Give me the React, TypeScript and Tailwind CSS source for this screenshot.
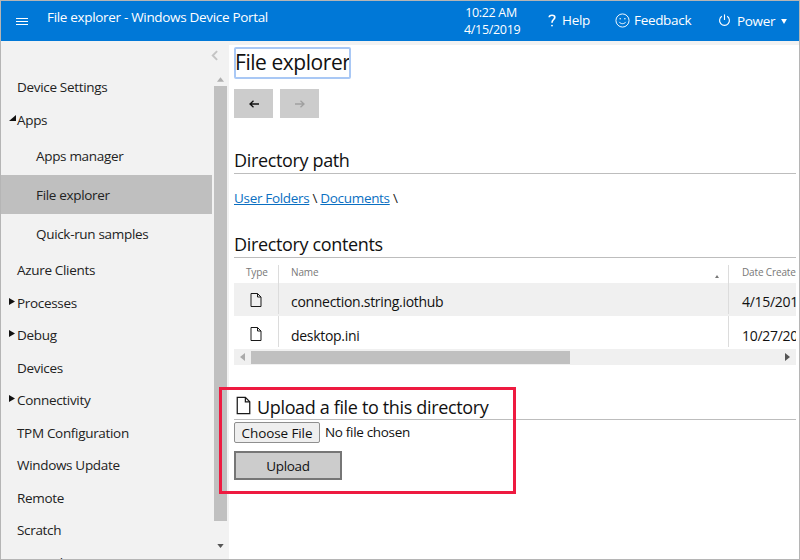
import React from "react";

const FileIcon = ({ className }: { className: string }) => (
  <svg viewBox="0 0 12 14" className={className} fill="none" stroke="#1a1a1a" strokeWidth="1">
    <path d="M1 .5h6.5L11 4v9.5H1z" />
    <path d="M7.5 .5V4H11" />
  </svg>
);

const Caret = ({ open }: { open?: boolean }) => (
  <svg viewBox="0 0 7 7" className="absolute left-[8px] top-1/2 -mt-[5px] w-[7px] h-[7px]" fill="#111">
    {open ? <path d="M7 0v6H0z" /> : <path d="M0 0l6 3.5L0 7z" />}
  </svg>
);

const Item = ({ label, caret, open }: { label: string; caret?: boolean; open?: boolean }) => (
  <div className="relative h-[32.5px] flex items-center pl-4 shrink-0">
    {caret && <Caret open={open} />}
    {label}
  </div>
);

const Sub = ({ label, active }: { label: string; active?: boolean }) => (
  <div className={`h-[39px] flex items-center pl-[35px] pt-[2px] shrink-0 ${active ? "bg-[#bfbfbf]" : ""}`}>{label}</div>
);

const Heading = ({ children }: { children: React.ReactNode }) => (
  <div className="text-[18px] leading-[24px] tracking-[-0.35px] text-[#111] border-b border-[#bdbdbd] pb-[1px]">{children}</div>
);

const Row = ({ name, date, shaded }: { name: string; date: string; shaded?: boolean }) => (
  <div className={`flex text-[14px] tracking-[-0.3px] text-[#111] ${shaded ? "h-[33px] bg-[#f0f0f0]" : "h-[31px]"}`}>
    <div className={`w-[45px] border-r border-[#dcdcdc] flex justify-center ${shaded ? "pt-[10px] mb-[2px]" : "pt-[11px]"}`}>
      <FileIcon className="w-[12px] h-[14px] mr-[1px]" />
    </div>
    <div className={`w-[450px] pl-3 border-r border-[#dcdcdc] flex items-center ${shaded ? "pt-[5px] mb-[2px]" : "pt-[8px]"}`}>{name}</div>
    <div className={`pl-[13px] flex items-center whitespace-nowrap ${shaded ? "pt-[5px] mb-[2px]" : "pt-[8px]"}`}>{date}</div>
  </div>
);

export default function App() {
  return (
    <div className="relative w-[800px] h-[560px] overflow-hidden bg-white flex flex-col border-t border-l border-r border-b border-[#b5b5b5] text-[13.5px] tracking-[-0.32px] text-[#222]" style={{ fontFamily: '"Open Sans", "Noto Sans", sans-serif' }}>
      <header className="h-[40px] bg-[#0078d7] text-white flex items-center shrink-0">
        <div className="ml-[15px] w-[12px] flex flex-col gap-[2px]">
          <div className="h-px bg-white" />
          <div className="h-px bg-white" />
          <div className="h-px bg-white" />
        </div>
        <div className="ml-[19px] w-[417px] -mt-[7px] whitespace-nowrap">File explorer - Windows Device Portal</div>
        <div className="w-[54px] text-center text-[12.5px] leading-[17px] -mt-[1px] whitespace-nowrap">
          <div>10:22 AM</div>
          <div>4/15/2019</div>
        </div>
        <svg viewBox="0 0 8 14" className="ml-[30px] -mt-[2px] w-[8px] h-[13px]" fill="none" stroke="white" strokeWidth="1.8">
          <path d="M1 3.5C1 .6 7 .6 7 3.5 7 6 4 6 4 9.5" />
          <circle cx="4" cy="12.5" r="1" fill="white" stroke="none" />
        </svg>
        <span className="ml-[6px] w-[27px] -mt-[2px]">Help</span>
        <svg viewBox="0 0 16 16" className="ml-[26px] -mt-[1px] w-[15px] h-[15px]" fill="none" stroke="white" strokeWidth="1">
          <circle cx="8" cy="8" r="7" />
          <path d="M4.5 9.5c1.5 2.5 5.5 2.5 7 0" />
          <circle cx="5.5" cy="6" r=".8" fill="white" stroke="none" />
          <circle cx="10.5" cy="6" r=".8" fill="white" stroke="none" />
        </svg>
        <span className="ml-[4px] w-[57px] -mt-[2px]">Feedback</span>
        <svg viewBox="0 0 14 14" className="ml-[27px] -mt-[3px] w-[13px] h-[14px]" fill="none" stroke="white" strokeWidth="1.2">
          <path d="M7 1v6" />
          <path d="M4.2 3A5.3 5.3 0 1 0 9.8 3" />
        </svg>
        <span className="ml-[6px] w-[37px]">Power</span>
        <svg viewBox="0 0 7 6" className="ml-[7px] w-[6px] h-[5px]" fill="white"><path d="M0 0h7L3.5 6z" /></svg>
      </header>
      <div className="flex-1 flex min-h-0 bg-[#f2f2f2]">
        <aside className="w-[228px] shrink-0 flex text-[#222]">
          <nav className="w-[211px] pt-[29px] overflow-hidden flex flex-col">
            <div className="h-[33.5px] flex items-center pl-4 shrink-0">Device Settings</div>
            <Item label="Apps" caret open />
            <Sub label="Apps manager" />
            <Sub label="File explorer" active />
            <div className="h-[40.2px] flex items-center pl-[35px] pt-[1px] shrink-0">Quick-run samples</div>
            <Item label="Azure Clients" />
            <Item label="Processes" caret />
            <Item label="Debug" caret />
            <Item label="Devices" />
            <Item label="Connectivity" caret />
            <Item label="TPM Configuration" />
            <Item label="Windows Update" />
            <Item label="Remote" />
            <Item label="Scratch" />
            <Item label="Tutorials" />
          </nav>
          <div className="ml-[2px] w-[13px] flex flex-col items-center">
            <svg viewBox="0 0 8 12" className="mt-[9px] self-start -ml-[3px] w-[7px] h-[11px]" fill="none" stroke="#c4c4c4" strokeWidth="2.2"><path d="M7 1L2 6l5 5" /></svg>
            <svg viewBox="0 0 8 5" className="mt-[16px] w-[7px] h-[5px]" fill="#b0b0b0"><path d="M4 0l4 5H0z" /></svg>
            <div className="mt-[4px] w-[13px] h-[435px] bg-[#c0c0c0]" />
            <svg viewBox="0 0 8 5" className="mt-[23px] w-[7px] h-[4px]" fill="#555"><path d="M0 0h8L4 5z" /></svg>
          </div>
        </aside>
        <main className="flex-1 min-w-0 mt-[4px] bg-white pl-[5px] pr-[3px] flex flex-col">
          <div className="w-[117px] h-[32px] mt-[2px] border-2 border-[#a9c8f5] rounded-[2px] flex items-center text-[21px] tracking-[-0.45px] text-[#111] whitespace-nowrap overflow-hidden">
            <span className="-ml-[1px]">File explorer</span>
          </div>
          <div className="flex gap-[7px] mt-[10px]">
            <div className="w-[39px] h-[29px] bg-[#cccccc] flex items-center justify-center">
              <svg viewBox="0 0 10 8" className="w-[10px] h-[8px]" fill="none" stroke="#111" strokeWidth="1.3"><path d="M10 4H1M4.5.8L1 4l3.5 3.2" /></svg>
            </div>
            <div className="w-[39px] h-[29px] bg-[#cccccc] flex items-center justify-center">
              <svg viewBox="0 0 10 8" className="w-[10px] h-[8px]" fill="none" stroke="#a0a0a0" strokeWidth="1.3"><path d="M0 4h9M5.5.8L9 4 5.5 7.2" /></svg>
            </div>
          </div>
          <div className="mt-[30px]"><Heading>Directory path</Heading></div>
          <div className="mt-[14px] leading-[20px] text-[#222]">
            <span className="text-[#0a6fc2] underline">User Folders</span> \ <span className="text-[#0a6fc2] underline">Documents</span> \
          </div>
          <div className="mt-[24px]"><Heading>Directory contents</Heading></div>
          <div className="mt-[7px] overflow-hidden">
            <div className="w-[800px]">
              <div className="flex h-[18px] text-[10px] tracking-[-0.15px] text-[#777]">
                <div className="w-[45px] border-r border-[#dcdcdc] pl-[12px]">Type</div>
                <div className="relative w-[450px] border-r border-[#dcdcdc] pl-3">
                  Name
                  <svg viewBox="0 0 4 3" className="absolute right-[9px] top-[10px] w-[4px] h-[3px]" fill="#777"><path d="M2 0l2 3H0z" /></svg>
                </div>
                <div className="pl-[13px] whitespace-nowrap">Date Created</div>
              </div>
              <Row name="connection.string.iothub" date="4/15/2019" shaded />
              <Row name="desktop.ini" date="10/27/2018" />
            </div>
            <div className="mt-[2px] h-[16px] bg-[#f0f0f0] flex items-center">
              <svg viewBox="0 0 5 8" className="ml-[6px] w-[5px] h-[8px]" fill="#aaa"><path d="M5 0v8L0 4z" /></svg>
              <div className="ml-[6px] w-[319px] h-[13px] bg-[#c0c0c0]" />
              <svg viewBox="0 0 5 8" className="ml-[215px] w-[5px] h-[8px]" fill="#555"><path d="M0 0v8l5-4z" /></svg>
            </div>
          </div>
          <div className="mt-[30px] flex items-center gap-[6px] border-b border-[#bdbdbd] text-[18px] leading-[24px] tracking-[-0.35px] text-[#111]">
            <FileIcon className="ml-[2px] w-[15px] h-[19px] -mt-[3px]" />
            <span>Upload a file to this directory</span>
          </div>
          <div className="mt-[2px] flex items-center text-[#111]">
            <button className="w-[86px] h-[21px] bg-[#efefef] border border-[#8f8f8f] rounded-[2px] leading-[18px] tracking-[-0.1px]">Choose File</button>
            <span className="ml-[5px]">No file chosen</span>
          </div>
          <button className="mt-[8px] w-[108px] h-[29px] pt-[1px] bg-[#cccccc] border-2 border-[#767676] text-[#111]">Upload</button>
        </main>
      </div>
      <div className="absolute left-[218px] top-[386px] w-[297px] h-[107px] border-[3px] border-[#ee1a40]" />
    </div>
  );
}
